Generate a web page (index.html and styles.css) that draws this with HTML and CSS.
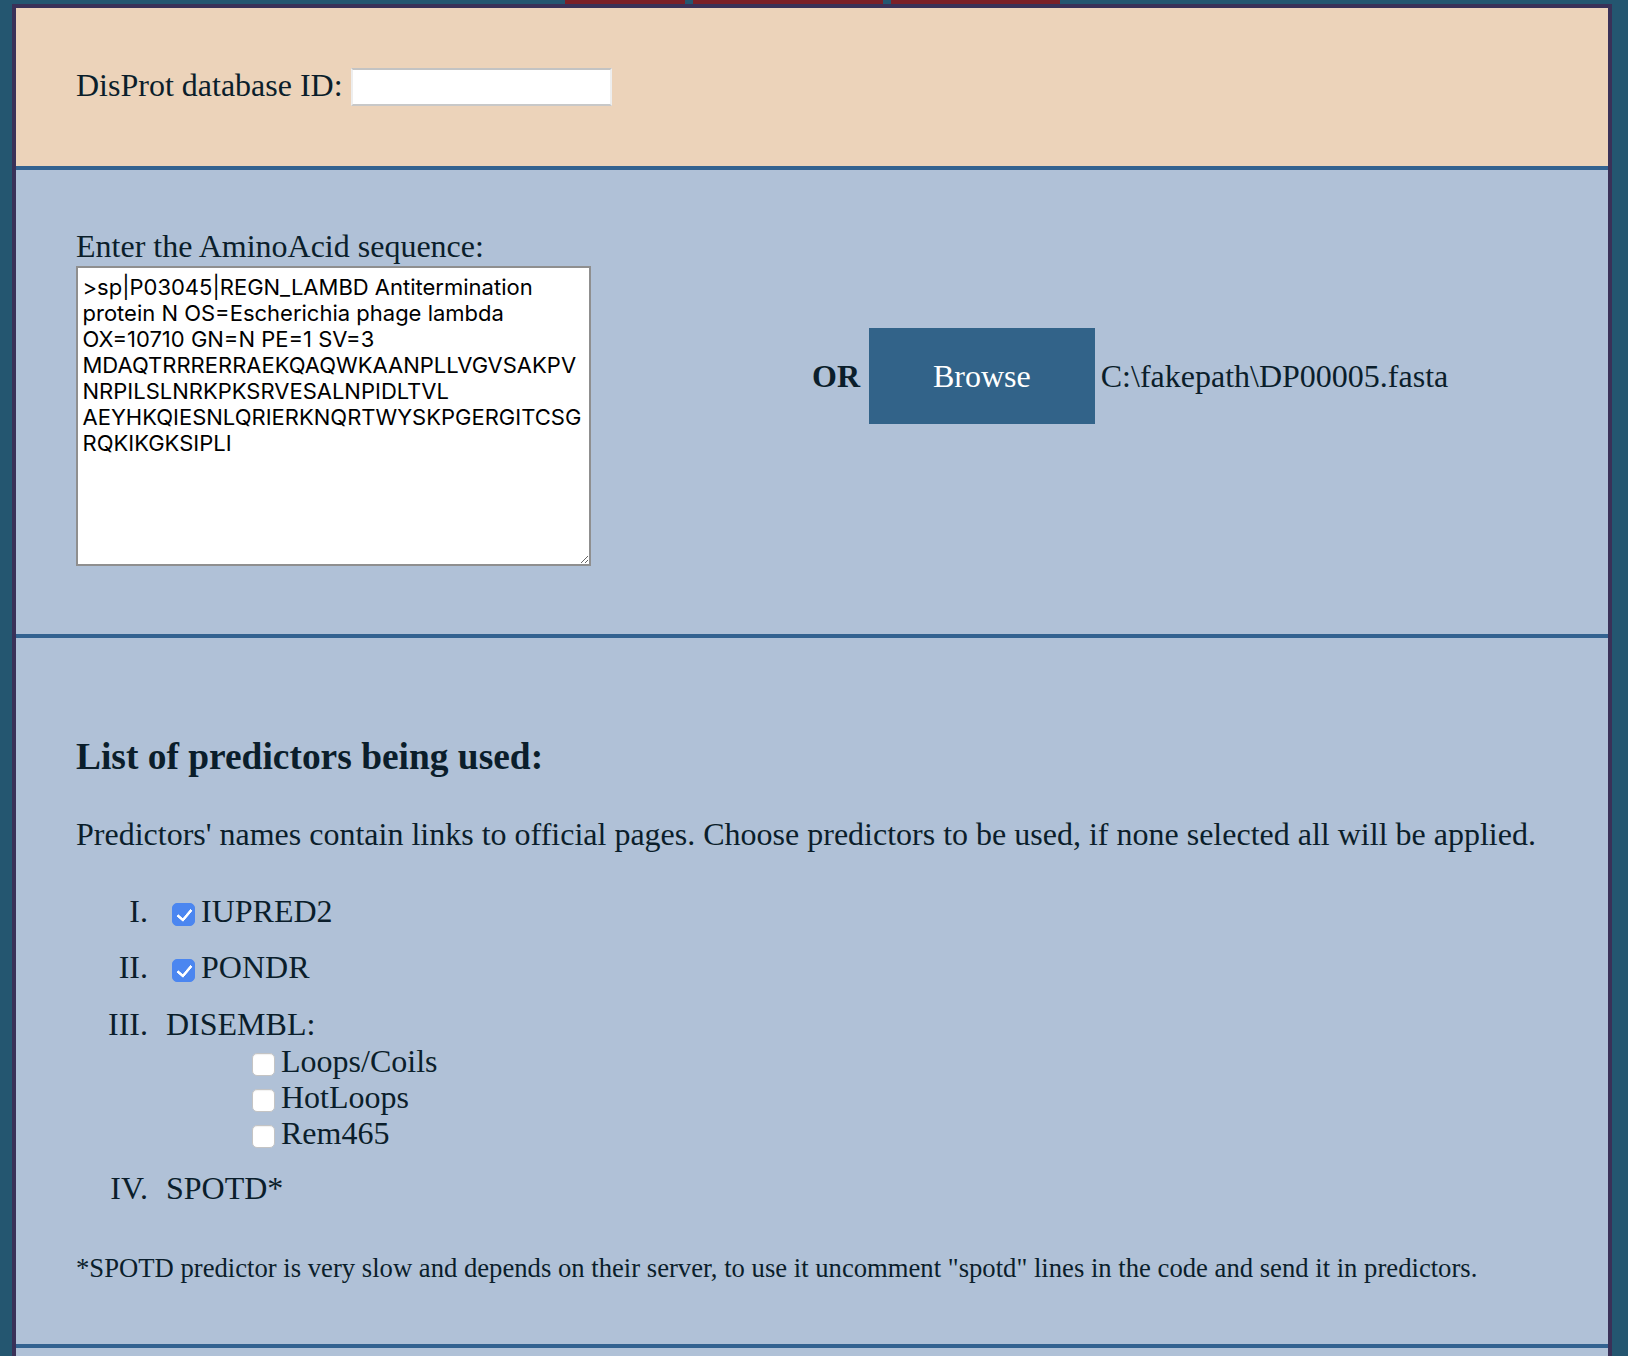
FILE: index.html
```html
<!DOCTYPE html>
<html lang="en">
<head>
<meta charset="utf-8">
<title>Disorder predictors</title>
<link rel="stylesheet" href="styles.css">
</head>
<body>
<div class="tabs" aria-hidden="true">
  <span class="tab tab-a"></span>
  <span class="tab tab-b"></span>
  <span class="tab tab-c"></span>
</div>
<main class="frame">
  <section class="panel panel-id">
    <label class="id-label" for="dbid">DisProt database ID:</label>
    <input id="dbid" class="id-input" type="text">
  </section>

  <section class="panel panel-seq">
    <div class="seq-col">
      <label class="seq-label" for="seq">Enter the AminoAcid sequence:</label>
      <textarea id="seq" class="seq-input">&gt;sp|P03045|REGN_LAMBD Antitermination
protein N OS=Escherichia phage lambda
OX=10710 GN=N PE=1 SV=3
MDAQTRRRERRAEKQAQWKAANPLLVGVSAKPV
NRPILSLNRKPKSRVESALNPIDLTVL
AEYHKQIESNLQRIERKNQRTWYSKPGERGITCSG
RQKIKGKSIPLI</textarea>
    </div>
    <div class="upload">
      <span class="or">OR</span>
      <button class="browse" type="button">Browse</button>
      <span class="filename">C:\fakepath\DP00005.fasta</span>
    </div>
  </section>

  <section class="panel panel-pred">
    <h3 class="pred-title">List of predictors being used:</h3>
    <p class="pred-intro">Predictors' names contain links to official pages. Choose predictors to be used, if none selected all will be applied.</p>
    <ol class="predictors">
      <li><input class="check" type="checkbox" checked><a class="pred-link" href="#">IUPRED2</a></li>
      <li><input class="check" type="checkbox" checked><a class="pred-link" href="#">PONDR</a></li>
      <li><a class="pred-link" href="#">DISEMBL:</a>
        <ul class="sub">
          <li><input class="check" type="checkbox">Loops/Coils</li>
          <li><input class="check" type="checkbox">HotLoops</li>
          <li><input class="check" type="checkbox">Rem465</li>
        </ul>
      </li>
      <li><a class="pred-link" href="#">SPOTD*</a></li>
    </ol>
    <p class="note">*SPOTD predictor is very slow and depends on their server, to use it uncomment "spotd" lines in the code and send it in predictors.</p>
  </section>

  <section class="panel panel-next"></section>
</main>
</body>
</html>
```

FILE: styles.css
```css
html, body {
  margin: 0;
  padding: 0;
}

body {
  background: #245670;
  font-family: "Liberation Serif", "Times New Roman", serif;
  font-size: 32px;
  color: #0b1e2b;
  overflow: hidden;
}

.tabs {
  width: 1600px;
  margin-left: 12px;
  height: 4px;
  display: flex;
  justify-content: center;
  gap: 8px;
}

.tab {
  display: block;
  height: 4px;
  background: #7a2028;
}

.tab-a { width: 120px; }
.tab-b { width: 190px; }
.tab-c { width: 169px; }

.frame {
  display: block;
  width: 1600px;
  margin-left: 12px;
  box-sizing: border-box;
  border: 4px solid #3a3158;
  border-bottom: none;
}

.panel {
  border-bottom: 4px solid #336290;
  background: #b0c1d7;
}

/* ---------- DisProt ID ---------- */
.panel-id {
  background: #ecd3ba;
  height: 158px;
  padding: 0 60px;
  display: flex;
  align-items: center;
  gap: 8px;
}

.id-label {
  margin-bottom: 4px;
}

.id-input {
  width: 261px;
  height: 38px;
  box-sizing: border-box;
  margin: 0;
  background: #ffffff;
  border-style: solid;
  border-width: 2px;
  border-color: #c3c3c3 #eeeeee #c8c8c8 #eeeeee;
  font-size: 26px;
}

/* ---------- Sequence ---------- */
.panel-seq {
  display: flex;
  align-items: flex-start;
  padding: 58px 60px 68px;
}

.seq-col {
  display: flex;
  flex-direction: column;
}

.seq-label {
  display: block;
  line-height: 36.8px;
}

.seq-input {
  display: block;
  margin: 1px 0 0;
  width: 515px;
  height: 300px;
  box-sizing: border-box;
  border: 2px solid #8f8f8f;
  padding: 6px 4.5px 4px;
  background: #ffffff;
  color: #000000;
  font-family: "Inter", "Liberation Sans", Arial, sans-serif;
  font-size: 22px;
  line-height: 26px;
  white-space: pre;
  overflow: hidden;
  resize: both;
}

.upload {
  display: flex;
  align-items: center;
  margin-left: 221px;
  margin-top: 100px;
}

.or {
  font-weight: bold;
  margin-right: 9px;
}

.browse {
  height: 96px;
  padding: 0 64px;
  border: none;
  margin: 0 6px 0 0;
  background: #326389;
  color: #ffffff;
  font-family: inherit;
  font-size: 32px;
  cursor: pointer;
}

/* ---------- Predictors ---------- */
.panel-pred {
  padding: 60px 60px 60px;
}

.pred-title {
  font-size: 37.44px;
  font-weight: bold;
  margin: 37.44px 0;
}

.pred-intro {
  margin: 32px 0;
}

.predictors {
  list-style: none;
  counter-reset: pred;
  margin: 32px 0 35px;
  padding: 0 0 0 90px;
}

.predictors > li {
  counter-increment: pred;
  padding: 8.5px 0 10.7px;
}

.predictors > li::before {
  content: counter(pred, upper-roman) ".";
  display: inline-block;
  width: 72px;
  margin-left: -90px;
  margin-right: 18px;
  text-align: right;
}

.pred-link {
  color: inherit;
  text-decoration: none;
}

.sub {
  list-style: none;
  margin: 0;
  padding: 0 0 0 80px;
}

.sub > li {
  line-height: 36.1px;
}

.check {
  -webkit-appearance: none;
  appearance: none;
  position: relative;
  display: inline-block;
  width: 23px;
  height: 23px;
  margin: 0 6px;
  vertical-align: -4px;
  box-sizing: border-box;
  border: 1px solid #c4c4c4;
  border-radius: 5px;
  background: #ffffff;
  box-shadow: inset 0 1px 1px rgba(0, 0, 0, 0.06);
}

.check:checked {
  background: #4b86f0;
  border-color: #4b86f0;
  box-shadow: none;
}

.check:checked::after {
  content: "";
  position: absolute;
  left: 7px;
  top: 2px;
  width: 6px;
  height: 12px;
  border-right: 3px solid #ffffff;
  border-bottom: 3px solid #ffffff;
  border-radius: 1px;
  transform: rotate(40deg);
}

.note {
  font-size: 26.67px;
  margin: 0;
}

.panel-next {
  height: 120px;
}
```
